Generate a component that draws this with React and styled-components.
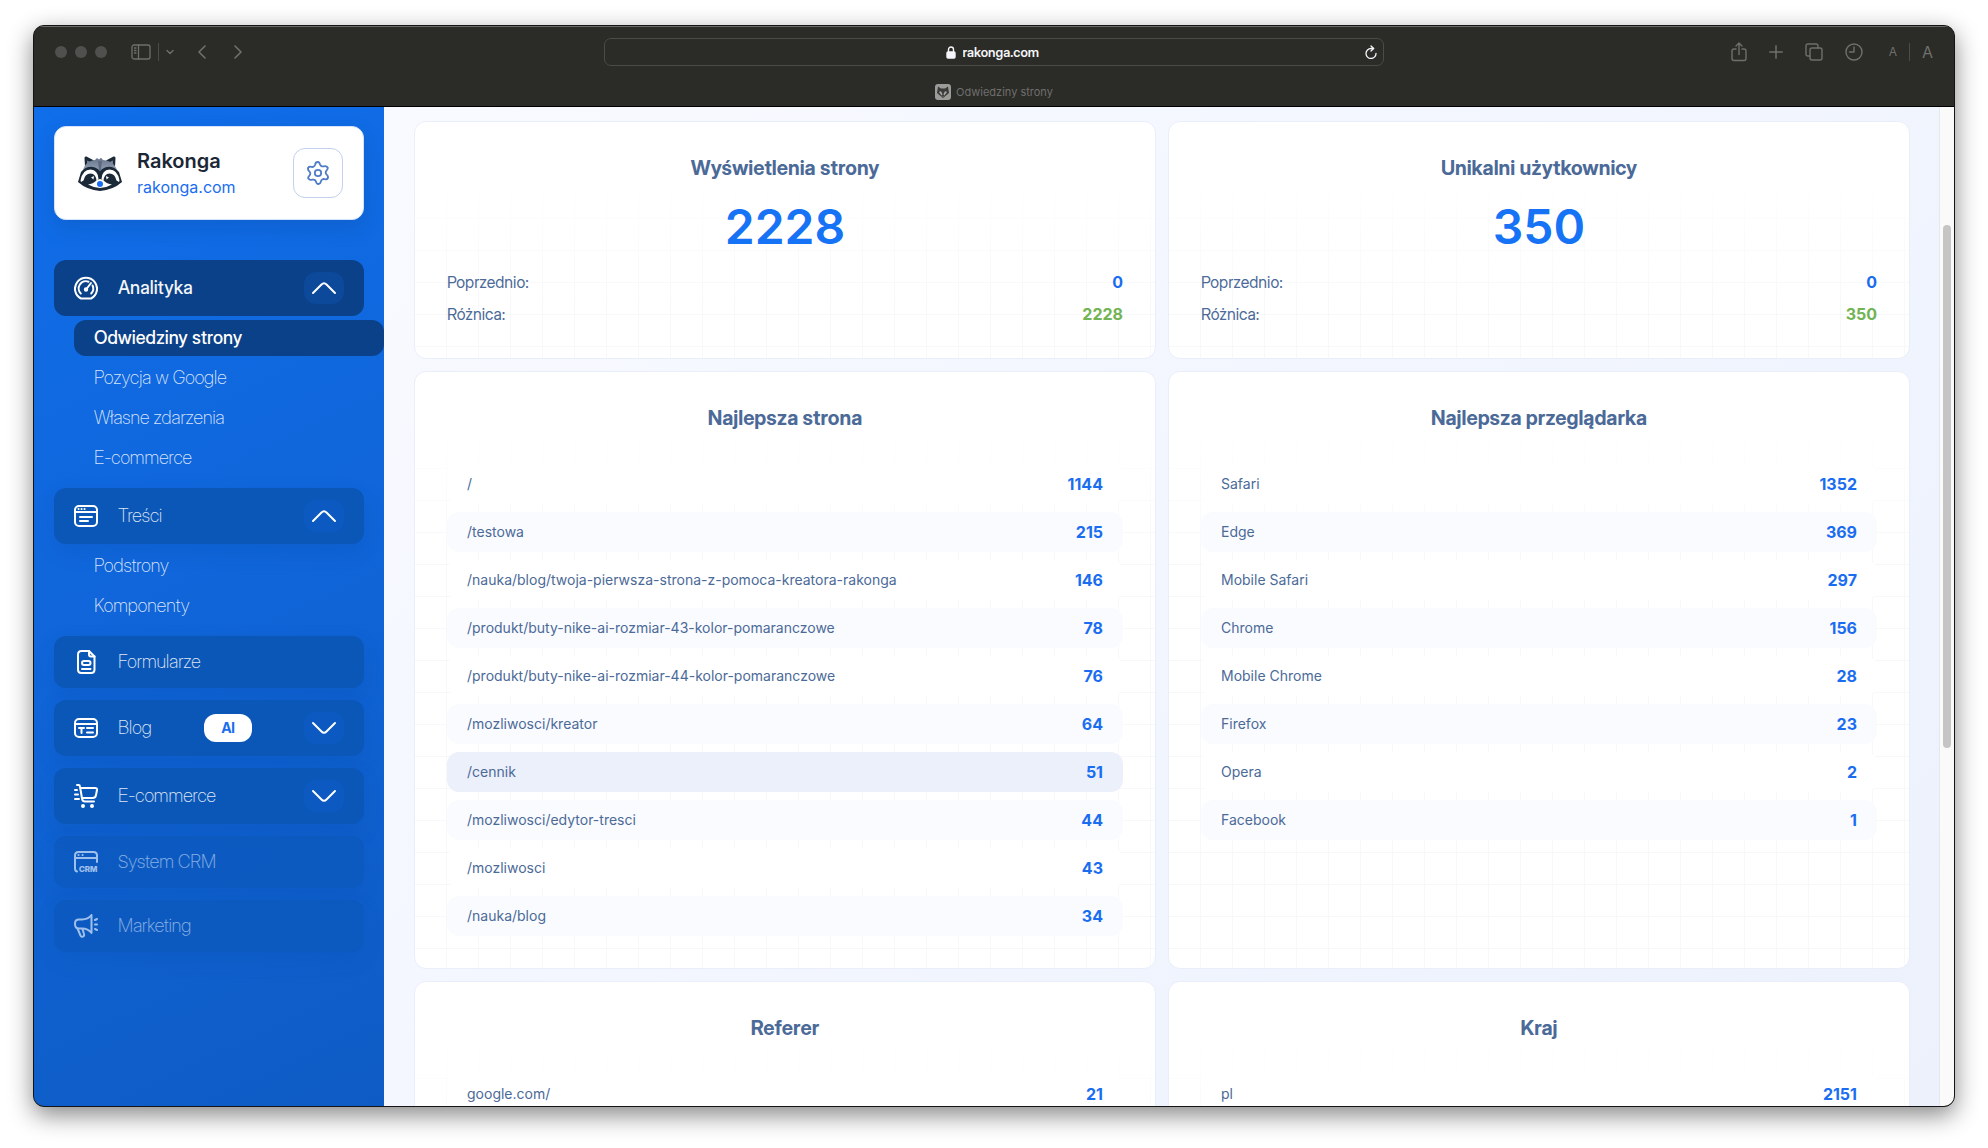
import React from "react";
import styled, { createGlobalStyle, css } from "styled-components";

const displayFont = `"Inter Display", Inter, "Noto Sans", sans-serif`;

const GlobalStyle = createGlobalStyle`
  *, *::before, *::after {
    box-sizing: border-box;
  }

  body {
    margin: 0;
    background: #ffffff;
    font-family: Inter, "Noto Sans", sans-serif;
  }

  button, input {
    font: inherit;
    color: inherit;
    border: none;
    background: none;
    padding: 0;
    margin: 0;
  }

  button {
    cursor: pointer;
  }

  a {
    color: inherit;
    text-decoration: none;
  }

  h1, h2, p, ul, dl, dd {
    margin: 0;
    padding: 0;
  }

  ul {
    list-style: none;
  }

  svg {
    display: block;
    flex: none;
  }
`;

const Desktop = styled.div`
  display: flex;
  height: 100vh;
  padding: 25px 33px 41px;
`;

const BrowserWindow = styled.div`
  flex: 1;
  min-width: 0;
  display: flex;
  flex-direction: column;
  overflow: hidden;
  border: 1px solid #141414;
  border-radius: 11px;
  background: #2b2b27;
  box-shadow: 0 8px 24px rgba(0, 0, 0, 0.48);
`;

/* browser chrome */

const Chrome = styled.header`
  flex: none;
  border-bottom: 1px solid #000000;
  background: #2b2b27;
  box-shadow: inset 0 1px 0 #6b6b69;
  color: #6f6f6d;
`;

const Toolbar = styled.div`
  display: grid;
  grid-template-columns: 1fr minmax(300px, 780px) 1fr;
  align-items: center;
  height: 52px;
  padding: 0 21px;
`;

const ToolbarSide = styled.div`
  display: flex;
  align-items: center;
  justify-content: ${(props) => (props.$end ? "flex-end" : "flex-start")};
  gap: ${(props) => (props.$end ? 22 : 24)}px;
`;

const ToolGroup = styled.div`
  display: flex;
  align-items: center;
  gap: ${(props) => props.$gap}px;
`;

const TextSizeGroup = styled(ToolGroup)`
  margin-left: 4px;
`;

const TrafficLight = styled.span`
  width: 12px;
  height: 12px;
  border-radius: 50%;
  background: #50504e;
`;

const ToolButton = styled.button`
  display: flex;
  align-items: center;
  font-size: ${(props) => props.$size || 16}px;
  line-height: 20px;
`;

const ToolDivider = styled.span`
  width: 1px;
  height: 18px;
  background: #4c4c4a;
`;

const AddressBar = styled.div`
  display: flex;
  align-items: center;
  justify-content: center;
  position: relative;
  height: 28px;
  border: 1px solid #4b4b49;
  border-radius: 7px;
  color: #f4f6fa;
`;

const AddressInput = styled.input`
  width: 80px;
  margin-left: 7px;
  font-family: ${displayFont};
  font-size: 13px;
  font-weight: 600;
  line-height: 20px;
  outline: none;
`;

const ReloadButton = styled.button`
  position: absolute;
  right: 5px;
`;

const TabStrip = styled.div`
  display: flex;
  align-items: center;
  justify-content: center;
  gap: 5px;
  height: 28px;
  font-size: 11px;
`;

/* page frame */

const Page = styled.div`
  flex: 1;
  min-height: 0;
  display: flex;
`;

const Sidebar = styled.aside`
  flex: none;
  width: 350px;
  padding: 19px 20px;
  display: flex;
  flex-direction: column;
  gap: 40px;
  overflow: hidden;
  background: linear-gradient(155deg, #106eea 0%, #1067dc 40%, #0e5bc4 100%);
`;

const ScrollTrack = styled.div`
  flex: none;
  width: 15px;
  padding: 118px 3px 0;
  border-left: 1px solid #e6e8ee;
  background: #fafafa;
`;

const ScrollThumb = styled.div`
  width: 8px;
  height: 65%;
  max-height: 523px;
  border-radius: 4px;
  background: #c5c5c5;
`;

/* site card */

const SiteCard = styled.section`
  flex: none;
  display: flex;
  align-items: center;
  height: 94px;
  padding: 0 20px 0 23px;
  border: 1px solid #d5e2fa;
  border-radius: 12px;
  background: #ffffff;
  box-shadow: 0 8px 20px rgba(9, 60, 130, 0.2);
`;

const SiteInfo = styled.div`
  flex: 1;
  margin-left: 15px;
`;

const SiteName = styled.h1`
  font-size: 20px;
  font-weight: 600;
  line-height: 28px;
  color: #1b2736;
`;

const SiteLink = styled.a`
  display: block;
  font-size: 16px;
  line-height: 24px;
  color: #1a6df0;
`;

const SettingsButton = styled.button`
  display: flex;
  align-items: center;
  justify-content: center;
  width: 50px;
  height: 50px;
  border: 1px solid #c3d1ee;
  border-radius: 12px;
  color: #4f7cc9;
`;

/* navigation */

const Menu = styled.ul`
  display: flex;
  flex-direction: column;
  gap: 12px;
  font-family: ${displayFont};
`;

const MenuLink = styled.a`
  display: flex;
  align-items: center;
  height: ${(props) => (props.$group ? 56 : 52)}px;
  padding: 0 20px;
  border-radius: 12px;
  background: #0b57b8;
  box-shadow: 0 8px 20px rgba(8, 60, 150, 0.16);
  color: #ffffff;
  font-size: 18px;
  font-weight: 200;
  line-height: 24px;

  ${(props) =>
    props.$active &&
    css`
      background: #0b4188;
      font-weight: 500;
      box-shadow: none;
    `}

  ${(props) =>
    props.$disabled &&
    css`
      opacity: 0.6;
    `}
`;

const MenuLabel = styled.span`
  margin-left: 20px;
  opacity: ${(props) => (props.$active ? 0.95 : 0.85)};
`;

const Badge = styled.span`
  margin-left: auto;
  margin-right: 52px;
  padding: 0 17px;
  border-radius: 12px;
  background: #ffffff;
  color: #1a6df0;
  font-size: 14px;
  font-weight: 700;
  line-height: 28px;
`;

const Toggle = styled.span`
  display: flex;
  align-items: center;
  justify-content: center;
  width: 40px;
  height: 32px;
  margin-left: ${(props) => (props.$afterBadge ? 0 : "auto")};
  border-radius: 12px;
  background: rgba(20, 105, 230, 0.2);

  svg {
    transform: ${(props) => (props.$open ? "none" : "rotate(180deg)")};
  }
`;

const SubMenu = styled.ul`
  display: flex;
  flex-direction: column;
  gap: 4px;
  margin: 4px -20px 0 20px;
`;

const SubLink = styled.a`
  display: block;
  padding: 0 20px;
  border-radius: 12px;
  background: ${(props) => (props.$active ? "#0b4188" : "transparent")};
  color: ${(props) => (props.$active ? "#ffffff" : "rgba(255, 255, 255, 0.85)")};
  font-size: 18px;
  font-weight: ${(props) => (props.$active ? 500 : 200)};
  line-height: 36px;
`;

/* dashboard */

const Dashboard = styled.main`
  flex: 1;
  min-width: 0;
  overflow: hidden;
  padding: 14px 29px 0 30px;
  background: linear-gradient(135deg, #f9faff 0%, #f4f7ff 35%, #ecf1fc 100%);
`;

const CardGrid = styled.div`
  display: grid;
  grid-template-columns: repeat(2, minmax(0, 1fr));
  gap: 12px;
`;

const Card = styled.section`
  padding: 32px;
  border: 1px solid #e9eefb;
  border-radius: 12px;
  background-color: #ffffff;
  background-image:
    linear-gradient(#ffffff 0, #ffffff 48px, rgba(255, 255, 255, 0) 190px),
    linear-gradient(#f7f8fa 1px, transparent 1px),
    linear-gradient(90deg, #f7f8fa 1px, transparent 1px);
  background-size: auto, 32px 32px, 32px 32px;
  background-position: 0 0, 0 0, -1px 0;
`;

const CardTitle = styled.h2`
  font-family: ${displayFont};
  font-size: 20px;
  font-weight: 700;
  line-height: 28px;
  text-align: center;
  color: #4b6a98;
`;

const BigNumber = styled.p`
  margin: 13px 0 11px;
  font-size: 48px;
  font-weight: 600;
  line-height: 64px;
  text-align: center;
  color: #1673f5;
`;

const Comparison = styled.dl`
  display: flex;
  flex-direction: column;
  gap: 8px;
`;

const ComparisonRow = styled.div`
  display: flex;
  justify-content: space-between;
  font-size: 16px;
  line-height: 24px;
  color: #4b6a98;

  dt {
    font-family: ${displayFont};
  }

  dd {
    font-weight: 700;
    color: ${(props) => (props.$positive ? "#72b353" : "#1a6df0")};
  }
`;

const RankTable = styled.table`
  width: 100%;
  margin: 24px 0 -8px;
  border-collapse: separate;
  border-spacing: 0 8px;
`;

const RankRow = styled.tr`
  background: #ffffff;

  &:nth-child(even) {
    background: #fafbff;
  }

  ${(props) =>
    props.$hovered &&
    css`
      background: #ebf0fb;
    `}
`;

const RankName = styled.th`
  height: 40px;
  padding: 0 20px;
  border-radius: 12px 0 0 12px;
  font-size: 14px;
  font-weight: 400;
  line-height: 20px;
  text-align: left;
  color: #4b6a98;
`;

const RankValue = styled.td`
  padding: 0 20px;
  border-radius: 0 12px 12px 0;
  font-size: 16px;
  font-weight: 700;
  line-height: 24px;
  text-align: right;
  color: #1a6df0;
`;

/* icons */

const Svg = ({ width = 24, height = 24, stroke = 2, children }) => (
  <svg
    width={width}
    height={height}
    viewBox={`0 0 ${width} ${height}`}
    fill="none"
    stroke="currentColor"
    strokeWidth={stroke}
    strokeLinecap="round"
    strokeLinejoin="round"
    aria-hidden="true"
  >
    {children}
  </svg>
);

const Raccoon = () => (
  <svg width="44" height="35" viewBox="0 0 44 35" aria-hidden="true">
    <defs>
      <linearGradient id="fur" x1="0" y1="0" x2="0" y2="1">
        <stop offset="0" stopColor="#66748a" />
        <stop offset="1" stopColor="#b3bfd2" />
      </linearGradient>
    </defs>
    <path d="M7 11 6.500 2Q6.500 0 8.500 .5L16 4.500ZM37 11 37.500 2Q37.500 0 35.500 .5L28 4.500Z" fill="#1c2938" />
    <path d="M9 8 9.200 4.500 13 6.500ZM35 8 34.800 4.500 31 6.500Z" fill="#7d8ba1" />
    <path d="M4 18Q6 5 17 4L19 2 21 3.500 23 1.800 25 4Q38 5 40 18L22 24Z" fill="url(#fur)" />
    <path d="M20 5H24L23 14H21Z" fill="#5d6b80" />
    <path d="M3 16Q9 9 17 11.500 20 12.500 22 15 24 12.500 27 11.500 35 9 41 16L44 26Q35 34 22 35 9 34 0 26Z" fill="#1c2938" />
    <path d="M2.500 24.500Q4.500 13.500 12.500 13.500 20 14 20.500 23L18.500 25Q18 17.500 12.500 17.500 7 17.500 5.500 24.500L3 26ZM41.500 24.500Q39.500 13.500 31.500 13.500 24 14 23.500 23L25.500 25Q26 17.500 31.500 17.500 37 17.500 38.500 24.500L41 26Z" fill="#ffffff" />
    <path d="M10 28.500Q15 28 18.500 24.500 22 21.500 25.500 24.500 29 28 34 28.500 28 32 22 32 16 32 10 28.500Z" fill="#ffffff" />
    <path d="M13 21.500 16 20 15.500 23.500ZM31 21.500 28 20 28.500 23.500Z" fill="#ffffff" />
    <circle cx="22" cy="28" r="3" fill="#1a6df0" />
  </svg>
);

const Gear = () => (
  <Svg stroke={1.8}>
    {[0, 60, 120, 180, 240, 300].map((angle) => (
      <path
        key={angle}
        transform={`rotate(${angle} 12 12)`}
        d="M12 1C13.300 1 13.700 2 14 3.200 14.500 5 16 5.800 17.800 5.300 19.100 4.900 20.800 4.900 21.500 6.500"
      />
    ))}
    <circle cx="12" cy="12" r="3.200" />
  </Svg>
);

const Gauge = () => (
  <Svg>
    <path d="M7 22.500H17A11 11 0 1 0 7 22.500Z" />
    <path d="M6.800 17.500A7.200 7.200 0 0 1 14.500 5.700M18.600 9.500A7.200 7.200 0 0 1 17.200 17.500" />
    <path d="M17 7 12.500 13" />
    <circle cx="12" cy="13.500" r="1.200" />
  </Svg>
);

const PageIcon = () => (
  <Svg>
    <rect x="1" y="2" width="22" height="20" rx="4" />
    <path d="M1 8H23" />
    <path d="M4.500 5H4.600M7.500 5H7.600M10.500 5H10.600M6 13H18M6 17H14" />
  </Svg>
);

const FormIcon = () => (
  <Svg>
    <path d="M15 1H7.500Q4 1 4 4.500V19.500Q4 23 7.500 23H17Q20.500 23 20.500 19.500V6.500Z" />
    <path d="M15 1V4.500Q15 6.500 17 6.500H20.500" />
    <rect x="8" y="11" width="8.500" height="4" rx="2" />
    <path d="M8 19H16.500" />
  </Svg>
);

const BlogIcon = () => (
  <Svg>
    <rect x="1" y="3" width="22" height="18" rx="4" />
    <path d="M1 8H23M5 12H10M7.500 12V17M13 12H19M13 16.500H19" />
  </Svg>
);

const CartIcon = () => (
  <Svg>
    <path d="M3 1H4.500Q5.800 1 6 2.500L8 14.500Q8.500 17.500 11 17.500H20" />
    <path d="M6.500 4H21Q23.300 4 23 6L22 11Q21.500 14 18.500 14H8" />
    <path d="M1 6H3M1 10.500H4M1 15H5" />
    <circle cx="9" cy="22" r="1" fill="currentColor" />
    <circle cx="18" cy="22" r="1" fill="currentColor" />
  </Svg>
);

const CrmIcon = () => (
  <Svg>
    <path d="M3 21.500Q1 21 1 18.500V5.500Q1 2 4.500 2H19.500Q23 2 23 5.500V12M1 8H23M4.500 5H4.600M8.500 5H8.600" />
    <text x="5" y="22" fontSize="8" fontWeight="800" fill="currentColor" stroke="none">
      CRM
    </text>
  </Svg>
);

const MegaphoneIcon = () => (
  <Svg>
    <path d="M17.500 1V19Q14 14.500 8 14.500H5Q1 14.500 1 10V9.500Q1 5.500 5 5.500H8Q14 5.500 17.500 1Z" />
    <path d="M3.500 14.500 6.500 21.500Q7.500 23.500 9.300 22.500 10.500 21.500 10 20L8.500 15" />
    <path d="M21 6 23 5M21 10.500H23M21 15 23 16" />
  </Svg>
);

const Chevron = () => (
  <Svg width={26} height={14}>
    <path d="M2 12 10.500 3.500Q13 1 15.500 3.500L24 12" />
  </Svg>
);

/* data */

const menu = [
  {
    label: "Analityka",
    icon: <Gauge />,
    active: true,
    open: true,
    items: [
      { label: "Odwiedziny strony", active: true },
      { label: "Pozycja w Google" },
      { label: "Własne zdarzenia" },
      { label: "E-commerce" },
    ],
  },
  {
    label: "Treści",
    icon: <PageIcon />,
    open: true,
    items: [{ label: "Podstrony" }, { label: "Komponenty" }],
  },
  { label: "Formularze", icon: <FormIcon /> },
  { label: "Blog", icon: <BlogIcon />, badge: "AI", items: [] },
  { label: "E-commerce", icon: <CartIcon />, items: [] },
  { label: "System CRM", icon: <CrmIcon />, disabled: true },
  { label: "Marketing", icon: <MegaphoneIcon />, disabled: true },
];

const stats = [
  { title: "Wyświetlenia strony", value: 2228, previous: 0, difference: 2228 },
  { title: "Unikalni użytkownicy", value: 350, previous: 0, difference: 350 },
];

const rankings = [
  {
    title: "Najlepsza strona",
    hovered: 6,
    rows: [
      ["/", 1144],
      ["/testowa", 215],
      ["/nauka/blog/twoja-pierwsza-strona-z-pomoca-kreatora-rakonga", 146],
      ["/produkt/buty-nike-ai-rozmiar-43-kolor-pomaranczowe", 78],
      ["/produkt/buty-nike-ai-rozmiar-44-kolor-pomaranczowe", 76],
      ["/mozliwosci/kreator", 64],
      ["/cennik", 51],
      ["/mozliwosci/edytor-tresci", 44],
      ["/mozliwosci", 43],
      ["/nauka/blog", 34],
    ],
  },
  {
    title: "Najlepsza przeglądarka",
    rows: [
      ["Safari", 1352],
      ["Edge", 369],
      ["Mobile Safari", 297],
      ["Chrome", 156],
      ["Mobile Chrome", 28],
      ["Firefox", 23],
      ["Opera", 2],
      ["Facebook", 1],
    ],
  },
  { title: "Referer", rows: [["google.com/", 21]] },
  { title: "Kraj", rows: [["pl", 2151]] },
];

const BrowserChrome = () => (
  <Chrome>
    <Toolbar>
      <ToolbarSide>
        <ToolGroup $gap={8}>
          <TrafficLight />
          <TrafficLight />
          <TrafficLight />
        </ToolGroup>
        <ToolGroup $gap={7}>
          <ToolButton aria-label="Sidebar">
            <Svg width={20} height={16} stroke={1.3}>
              <rect x="1" y="1" width="18" height="14" rx="2" />
              <path d="M7.500 1V15M3.500 4H5M3.500 6.500H5M3.500 9H5" />
            </Svg>
          </ToolButton>
          <ToolDivider />
          <ToolButton aria-label="Tab groups">
            <Svg width={8} height={6} stroke={1.4}>
              <path d="M1 1.500 4 4.500 7 1.500" />
            </Svg>
          </ToolButton>
        </ToolGroup>
        <ToolGroup $gap={28}>
          <ToolButton aria-label="Back">
            <Svg width={8} height={14} stroke={1.6}>
              <path d="M7 1 1 7 7 13" />
            </Svg>
          </ToolButton>
          <ToolButton aria-label="Forward">
            <Svg width={8} height={14} stroke={1.6}>
              <path d="M1 1 7 7 1 13" />
            </Svg>
          </ToolButton>
        </ToolGroup>
      </ToolbarSide>
      <AddressBar>
        <Svg width={10} height={13} stroke={1.4}>
          <rect x="1" y="6" width="8" height="6" rx="1" fill="currentColor" />
          <path d="M2.500 6V3.500A2.500 2.500 0 0 1 7.500 3.500V6" />
        </Svg>
        <AddressInput aria-label="Address" defaultValue="rakonga.com" />
        <ReloadButton aria-label="Reload">
          <Svg width={14} height={14} stroke={1.3}>
            <path d="M9.500 3.500H7A5 5 0 1 0 12 8.300M7 1 9.700 3.500 7 6" />
          </Svg>
        </ReloadButton>
      </AddressBar>
      <ToolbarSide $end>
        <ToolButton aria-label="Share">
          <Svg width={16} height={20} stroke={1.4}>
            <path d="M5 7H3Q1 7 1 9V16.500Q1 18.500 3 18.500H13Q15 18.500 15 16.500V9Q15 7 13 7H11M8 12.500V1.500M5 4 8 1 11 4" />
          </Svg>
        </ToolButton>
        <ToolButton aria-label="New tab">
          <Svg width={14} height={14} stroke={1.5}>
            <path d="M7 .8V13.200M.8 7H13.200" />
          </Svg>
        </ToolButton>
        <ToolButton aria-label="Tab overview">
          <Svg width={18} height={18} stroke={1.4}>
            <rect x="5" y="5" width="12" height="12" rx="2" />
            <path d="M5 13H3Q1 13 1 11V3Q1 1 3 1H11Q13 1 13 3V5" />
          </Svg>
        </ToolButton>
        <ToolButton aria-label="History">
          <Svg width={18} height={18} stroke={1.4}>
            <circle cx="9" cy="9" r="8" />
            <path d="M9 4V9H4.500" />
          </Svg>
        </ToolButton>
        <TextSizeGroup $gap={12}>
          <ToolButton $size={12} aria-label="Smaller text">A</ToolButton>
          <ToolDivider />
          <ToolButton $size={16} aria-label="Larger text">A</ToolButton>
        </TextSizeGroup>
      </ToolbarSide>
    </Toolbar>
    <TabStrip>
      <svg width="16" height="16" viewBox="0 0 16 16" aria-hidden="true">
        <rect width="16" height="16" rx="3" fill="#9b9b99" />
        <path d="M3 2.500 6 4.500H10L13 2.500 14 9 8 14 2 9Z" fill="#3b3b39" />
        <path d="M4 8Q6 6 7 9L8 12 9 9Q10 6 12 8L11 9.500 8 13 5 9.500Z" fill="#a5a5a3" />
        <circle cx="8" cy="11.500" r="1" fill="#3b3b39" />
      </svg>
      Odwiedziny strony
    </TabStrip>
  </Chrome>
);

const MenuItem = ({ label, icon, active, open, items, badge, disabled }) => (
  <li>
    <MenuLink href="#" $group={Boolean(items)} $active={active} $disabled={disabled} aria-disabled={disabled}>
      {icon}
      <MenuLabel $active={active}>{label}</MenuLabel>
      {badge && <Badge>{badge}</Badge>}
      {items && (
        <Toggle $open={open} $afterBadge={Boolean(badge)}>
          <Chevron />
        </Toggle>
      )}
    </MenuLink>
    {open && (
      <SubMenu>
        {items.map((item) => (
          <li key={item.label}>
            <SubLink href="#" $active={item.active}>
              {item.label}
            </SubLink>
          </li>
        ))}
      </SubMenu>
    )}
  </li>
);

const StatCard = ({ title, value, previous, difference }) => (
  <Card>
    <CardTitle>{title}</CardTitle>
    <BigNumber>{value}</BigNumber>
    <Comparison>
      <ComparisonRow>
        <dt>Poprzednio:</dt>
        <dd>{previous}</dd>
      </ComparisonRow>
      <ComparisonRow $positive>
        <dt>Różnica:</dt>
        <dd>{difference}</dd>
      </ComparisonRow>
    </Comparison>
  </Card>
);

const RankCard = ({ title, rows, hovered }) => (
  <Card>
    <CardTitle>{title}</CardTitle>
    <RankTable aria-label={title}>
      <tbody>
        {rows.map(([name, value], index) => (
          <RankRow key={name} $hovered={index === hovered}>
            <RankName scope="row">{name}</RankName>
            <RankValue>{value}</RankValue>
          </RankRow>
        ))}
      </tbody>
    </RankTable>
  </Card>
);

const App = () => {
  return (
    <>
      <GlobalStyle />
      <Desktop>
        <BrowserWindow>
          <BrowserChrome />
          <Page>
            <Sidebar>
              <SiteCard>
                <Raccoon />
                <SiteInfo>
                  <SiteName>Rakonga</SiteName>
                  <SiteLink href="#">rakonga.com</SiteLink>
                </SiteInfo>
                <SettingsButton aria-label="Ustawienia">
                  <Gear />
                </SettingsButton>
              </SiteCard>
              <nav>
                <Menu>
                  {menu.map((item) => (
                    <MenuItem key={item.label} {...item} />
                  ))}
                </Menu>
              </nav>
            </Sidebar>
            <Dashboard>
              <CardGrid>
                {stats.map((stat) => (
                  <StatCard key={stat.title} {...stat} />
                ))}
                {rankings.map((ranking) => (
                  <RankCard key={ranking.title} {...ranking} />
                ))}
              </CardGrid>
            </Dashboard>
            <ScrollTrack>
              <ScrollThumb />
            </ScrollTrack>
          </Page>
        </BrowserWindow>
      </Desktop>
    </>
  );
};

export default App;
